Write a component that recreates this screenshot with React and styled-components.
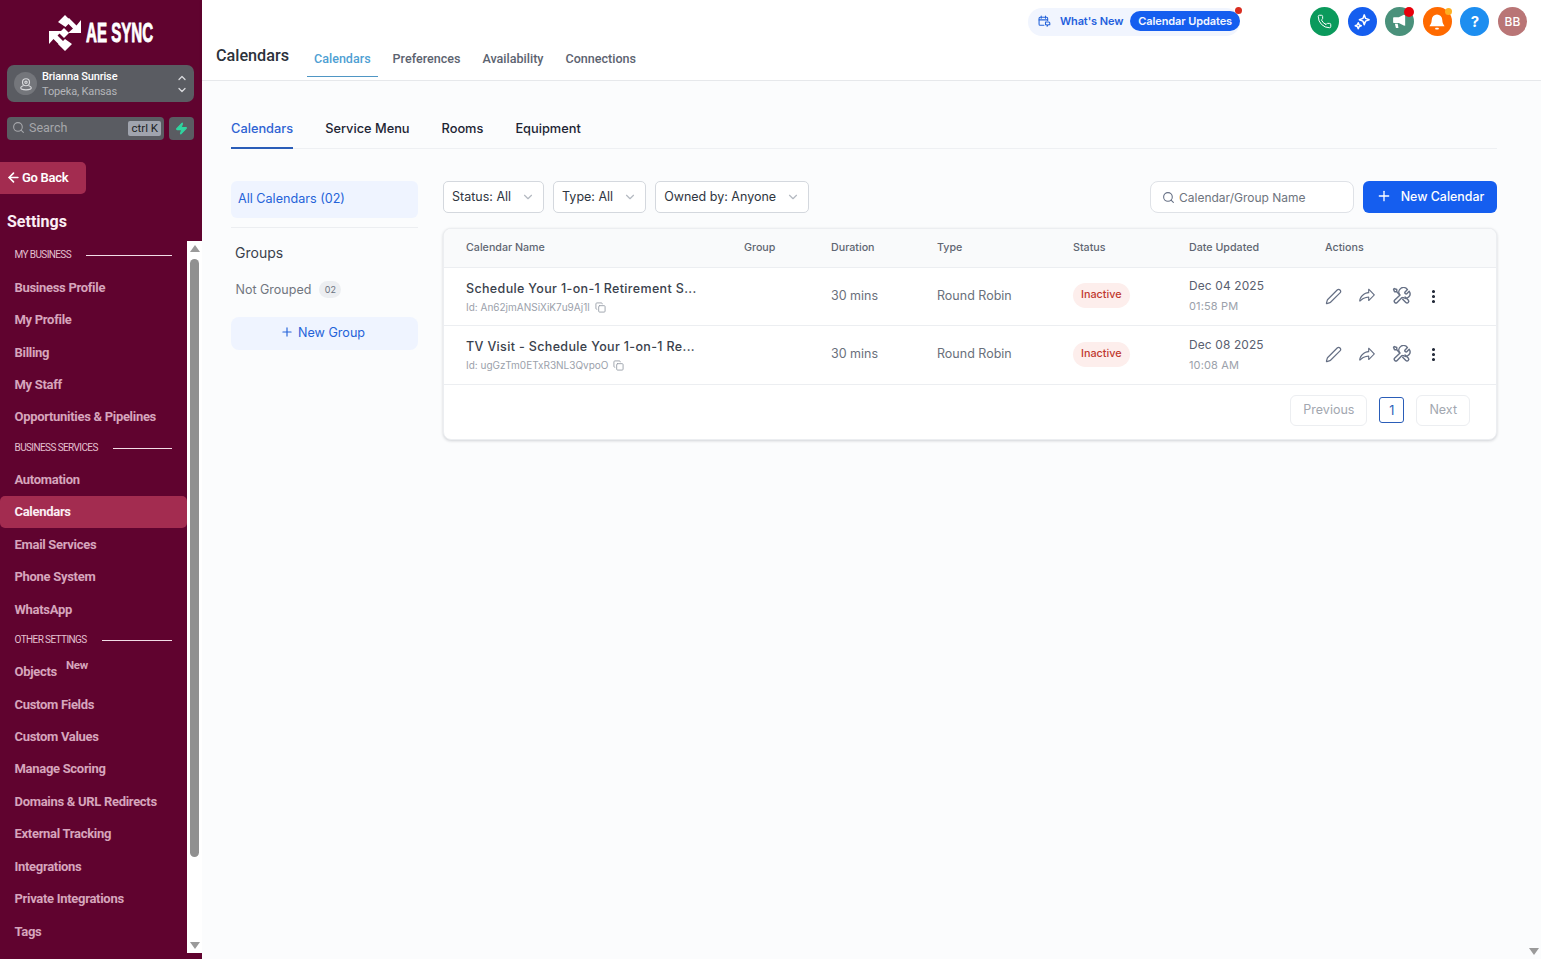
import React from 'react'
import styled, { createGlobalStyle } from 'styled-components'
import { Phone, Search, Plus, ChevronDown, ChevronUp, Copy, Pen, EllipsisVertical, ArrowLeft, Zap } from 'lucide-react'
import { PiShareFat } from 'react-icons/pi'

const GlobalStyle = createGlobalStyle`
    html, body {
        margin: 0;
        padding: 0;
        height: 100%;
        overflow: hidden;
        background: #fbfcfd;
    }
    * {
        box-sizing: border-box;
    }
`

const Page = styled.div`
    display: flex;
    width: 1541px;
    height: 959px;
    position: relative;
    overflow: hidden;
    font-family: Inter, "Liberation Sans", sans-serif;
`

/* sidebar */
const Sidebar = styled.aside`
    width: 202px;
    flex-shrink: 0;
    height: 100%;
    background: #60032f;
    display: flex;
    flex-direction: column;
    font-family: Roboto, "Liberation Sans", sans-serif;
`
const LogoRow = styled.div`
    height: 65px;
    display: flex;
    align-items: center;
    justify-content: center;
    padding-right: 4px;
    gap: 3px;
`
const LogoText = styled.span`
    display: inline-block;
    width: 66px;
    color: #fff;
    font-family: "Liberation Sans", sans-serif;
    font-weight: 700;
    font-size: 27px;
    line-height: 30px;
    white-space: nowrap;
    transform: scaleX(0.56);
    transform-origin: left center;
    -webkit-text-stroke: 0.9px #fff;
`
const Switcher = styled.div`
    margin: 0 8px 0 7px;
    height: 37px;
    border-radius: 7px;
    background: #5a5c62;
    display: flex;
    align-items: center;
    padding: 0 6px 0 7px;
    color: #fff;
`
const PinCircle = styled.div`
    width: 23px;
    height: 23px;
    border-radius: 50%;
    background: #74767b;
    display: flex;
    align-items: center;
    justify-content: center;
    flex-shrink: 0;
    margin-right: 5px;
`
const SwitcherText = styled.div`
    flex: 1;
    font-size: 11px;
    line-height: 15px;
    font-weight: 500;
    letter-spacing: -0.15px;
`
const SwitcherSub = styled.div`
    color: #b4b5b9;
    font-weight: 400;
`
const UpDown = styled.div`
    display: flex;
    flex-direction: column;
    gap: 0;
    color: #d8d9dc;
`
const SearchRow = styled.div`
    display: flex;
    gap: 5px;
    margin: 15px 8px 0 7px;
`
const SideSearch = styled.div`
    flex: 1;
    height: 23px;
    border-radius: 4px;
    background: #5a5c62;
    color: #a6a7ab;
    display: flex;
    align-items: center;
    padding: 0 3px 2px 5px;
    font-size: 12.5px;
    gap: 4px;
`
const Kbd = styled.span`
    margin: 2px 0 0 auto;
    background: #a0a4ae;
    color: #1d1f24;
    font-size: 11.5px;
    line-height: 15px;
    padding: 0 3px;
    border-radius: 2px;
`
const BoltButton = styled.div`
    width: 25px;
    height: 23px;
    border-radius: 4px;
    background: #5a5c62;
    display: flex;
    align-items: center;
    justify-content: center;
`
const BackButton = styled.div`
    width: 86px;
    height: 32px;
    margin-top: 22px;
    border-radius: 0 5px 5px 0;
    background: #a32c50;
    color: #fff;
    font-weight: 600;
    font-size: 13px;
    letter-spacing: -0.3px;
    display: flex;
    align-items: center;
    padding: 0 0 2px 6px;
    gap: 1px;
`
const SettingsTitle = styled.h2`
    margin: 18px 0 0 7px;
    height: 20px;
    color: #fbeef4;
    font-size: 16px;
    line-height: 20px;
    font-weight: 700;
`
const NavArea = styled.div`
    flex: 1;
    min-height: 0;
    margin-top: 9px;
    margin-bottom: 6px;
    display: flex;
`
const NavList = styled.nav`
    width: 187px;
    overflow: hidden;
`
const SectionLabel = styled.div`
    height: 30px;
    padding: 0 15px 2px 14.5px;
    display: flex;
    align-items: center;
    gap: 15px;
    font-size: 10px;
    color: #e3c0d0;
    letter-spacing: -0.6px;
    white-space: nowrap;
    &::after {
        content: '';
        flex: 1;
        height: 1px;
        margin-top: 3px;
        background: #f2dde7;
    }
`
const NavGroup = styled.div`
    &:first-child ${SectionLabel} {
        margin-top: -1px;
        margin-bottom: 1px;
    }
`
const NavItem = styled.a`
    height: 32.45px;
    display: flex;
    align-items: center;
    padding-left: 14.5px;
    border-radius: 5px;
    font-size: 13px;
    font-weight: 700;
    letter-spacing: -0.3px;
    white-space: nowrap;
    color: ${(p) => (p.$active ? '#fbeef4' : '#d6a5bc')};
    background: ${(p) => (p.$active ? '#a32c50' : 'transparent')};
`
const NewTag = styled.span`
    position: relative;
    top: -7px;
    margin-left: 9px;
    font-size: 11.5px;
    color: #d6a5bc;
`
const ScrollTrack = styled.div`
    width: 15px;
    background: #fff;
    display: flex;
    flex-direction: column;
    align-items: center;
    padding: 4px 0;
`
const ArrowUp = styled.div`
    width: 0;
    height: 0;
    border-left: 5px solid transparent;
    border-right: 5px solid transparent;
    border-bottom: 7px solid #9a9a9a;
`
const ArrowDown = styled.div`
    width: 0;
    height: 0;
    border-left: 5px solid transparent;
    border-right: 5px solid transparent;
    border-top: 7px solid #9a9a9a;
`
const Thumb = styled.div`
    width: 9px;
    height: 598px;
    margin: 7px 0 auto;
    border-radius: 5px;
    background: #909090;
`

/* main area */
const Main = styled.main`
    flex: 1;
    min-width: 0;
    display: flex;
    flex-direction: column;
`
const TopBar = styled.header`
    height: 81px;
    flex-shrink: 0;
    background: #fff;
    border-bottom: 1px solid #e6e8eb;
    box-shadow: 0 1px 4px rgba(16, 24, 40, 0.06);
    display: flex;
    justify-content: space-between;
    padding-left: 14px;
    font-family: Roboto, "Liberation Sans", sans-serif;
`
const TopLeft = styled.div`
    display: flex;
    align-items: flex-end;
`
const PageTitle = styled.h1`
    margin: 0 18px 12px 0;
    font-size: 16.2px;
    line-height: 24px;
    font-weight: 500;
    color: #2c323b;
`
const TopTab = styled.a`
    height: 44px;
    margin: 0 8px 3px 0;
    padding: 7px 7px 0;
    display: flex;
    align-items: center;
    font-size: 12.55px;
    font-weight: 500;
    color: ${(p) => (p.$active ? '#4f9fd3' : '#5c6370')};
    border-bottom: 1px solid ${(p) => (p.$active ? '#4f96c4' : 'transparent')};
`
const TopRight = styled.div`
    display: flex;
    align-items: flex-start;
    padding: 7px 14px 0 0;
`
const WhatsNew = styled.div`
    position: relative;
    width: 212px;
    height: 28px;
    margin: 1px 70px 0 0;
    padding: 0 0 2px 10px;
    border-radius: 14px;
    background: #f1f5fe;
    display: flex;
    align-items: center;
    font-family: Inter, sans-serif;
    font-size: 11px;
    font-weight: 600;
    color: #1f5fdd;
    letter-spacing: -0.1px;
`
const WhatsNewLabel = styled.span`
    margin-left: 9px;
    white-space: nowrap;
`
const UpdatesPill = styled.span`
    margin-left: 7px;
    height: 20px;
    padding: 0 8px 1px;
    border-radius: 10px;
    background: #155eef;
    color: #f2f6ff;
    display: flex;
    align-items: center;
    white-space: nowrap;
`
const PillDot = styled.span`
    position: absolute;
    top: -1px;
    right: -2px;
    width: 7px;
    height: 7px;
    border-radius: 50%;
    background: #d92d20;
`
const RoundIcons = styled.div`
    display: flex;
    gap: 8.6px;
`
const RoundIcon = styled.div`
    position: relative;
    width: 29px;
    height: 29px;
    border-radius: 50%;
    background: ${(p) => p.$bg};
    color: #fff;
    display: flex;
    align-items: center;
    justify-content: center;
    font-size: ${(p) => (p.$weight ? '15px' : '12px')};
    font-weight: ${(p) => p.$weight || 500};
    font-family: Inter, sans-serif;
`
const IconDot = styled.span`
    position: absolute;
    top: ${(p) => (p.$big ? '0' : '1px')};
    right: 0;
    width: ${(p) => (p.$big ? '10px' : '7px')};
    height: ${(p) => (p.$big ? '10px' : '7px')};
    border-radius: 50%;
    background: ${(p) => p.$color};
`

const Content = styled.section`
    flex: 1;
    padding: 31px 44px 0 29px;
    background: #fbfcfd;
`
const SubTabs = styled.div`
    display: flex;
    gap: 32px;
    height: 37px;
    border-bottom: 1px solid #eef0f3;
`
const SubTab = styled.a`
    height: 37px;
    padding-bottom: 3px;
    display: flex;
    align-items: center;
    font-size: 12.8px;
    font-weight: 500;
    color: ${(p) => (p.$active ? '#2f63d3' : '#1d2433')};
    border-bottom: 2px solid ${(p) => (p.$active ? '#2a5db8' : 'transparent')};
`
const Columns = styled.div`
    display: flex;
    margin-top: 32px;
    gap: 25px;
`
const GroupsPanel = styled.div`
    width: 187px;
    flex-shrink: 0;
`
const AllCalendars = styled.div`
    height: 37px;
    padding: 0 0 3px 7px;
    border-radius: 6px;
    background: #eff4ff;
    color: #2563d9;
    font-size: 12.6px;
    display: flex;
    align-items: center;
`
const PanelRule = styled.hr`
    border: 0;
    height: 1px;
    background: #eceef1;
    margin: 9px 0 0;
`
const GroupsTitle = styled.div`
    margin: 16px 0 0 4px;
    font-size: 14px;
    line-height: 18px;
    color: #3a414c;
`
const GroupRow = styled.div`
    display: flex;
    align-items: center;
    gap: 8px;
    margin: 18px 0 0 4.5px;
    height: 18px;
    font-size: 12.5px;
    color: #71767f;
`
const CountBadge = styled.span`
    width: 22px;
    height: 17px;
    border-radius: 9px;
    background: #eceef1;
    color: #6b7280;
    font-size: 9px;
    display: flex;
    align-items: center;
    justify-content: center;
`
const NewGroup = styled.div`
    margin-top: 19px;
    height: 33px;
    padding: 0 4px 3px 0;
    border-radius: 8px;
    background: #eff4ff;
    color: #2563d9;
    font-size: 12.6px;
    display: flex;
    align-items: center;
    justify-content: center;
    gap: 4px;
`
const ListPanel = styled.div`
    flex: 1;
    min-width: 0;
`
const FilterBar = styled.div`
    display: flex;
    align-items: center;
    gap: 9px;
    height: 32px;
`
const Filter = styled.div`
    height: 32px;
    padding: 0 8px 1px 8px;
    display: flex;
    align-items: center;
    gap: 10px;
    background: #fff;
    border: 1px solid #d4d8de;
    border-radius: 5px;
    font-size: 12.5px;
    color: #2f3641;
    white-space: nowrap;
`
const SearchBox = styled.div`
    width: 204px;
    height: 32px;
    margin-left: auto;
    background: #fff;
    border: 1px solid #dfe2e7;
    border-radius: 8px;
    display: flex;
    align-items: center;
    gap: 4px;
    padding-left: 11px;
    font-size: 12px;
    color: #6e747e;
`
const PrimaryButton = styled.button`
    width: 134px;
    height: 32px;
    padding: 0 0 2px 0;
    border: 0;
    border-radius: 6px;
    background: #155eef;
    color: #fff;
    font-family: inherit;
    font-size: 12.4px;
    font-weight: 500;
    display: flex;
    align-items: center;
    justify-content: center;
    gap: 9px;
`
const TableCard = styled.div`
    margin-top: 15px;
    background: #fff;
    border: 1px solid #eceef1;
    border-radius: 8px;
    box-shadow: 0 1px 3px rgba(16, 24, 40, 0.18);
    overflow: hidden;
`
const Row = styled.div`
    display: grid;
    grid-template-columns: 278px 87px 106px 136px 116px 136px 1fr;
    align-items: center;
    padding-left: 22px;
    height: ${(p) => (p.$head ? '38.5px' : '58.5px')};
    background: ${(p) => (p.$head ? '#f9fafb' : '#fff')};
    border-bottom: 1px solid #eceef1;
`
const HeadCell = styled.div`
    font-size: 10.7px;
    font-weight: 500;
    color: #5f6672;
`
const NameCell = styled.div`
    display: flex;
    flex-direction: column;
    gap: 4px;
    padding-top: 2px;
`
const CalName = styled.div`
    font-size: 12.5px;
    line-height: 16px;
    font-weight: 500;
    color: #3a414c;
    letter-spacing: 0.35px;
    white-space: nowrap;
`
const CalId = styled.div`
    display: flex;
    align-items: center;
    gap: 5px;
    font-size: 10px;
    line-height: 13px;
    color: #9ba1ab;
`
const Cell = styled.div`
    padding-bottom: 2px;
    font-size: 12.5px;
    color: #6a707b;
`
const StatusCell = styled.div`
    padding-bottom: 2px;
`
const StatusPill = styled.span`
    display: inline-flex;
    align-items: center;
    height: 25px;
    padding: 0 8px 2px;
    border-radius: 13px;
    background: #fdeeec;
    color: #c0392f;
    font-size: 10.8px;
    font-weight: 500;
`
const DateCell = styled.div`
    display: flex;
    flex-direction: column;
    gap: 6px;
    font-size: 11.9px;
    line-height: 15px;
    color: #596070;
    letter-spacing: 0.15px;
`
const TimeText = styled.span`
    font-size: 11px;
    color: #9ba1ab;
`
const Actions = styled.div`
    display: flex;
    align-items: center;
    gap: 16px;
    color: #667085;
`
const MoreIcon = styled(EllipsisVertical)`
    margin-left: -2px;
    color: #1d2433;
`
const Pager = styled.div`
    height: 54px;
    padding: 0 26px 3px 0;
    display: flex;
    align-items: center;
    justify-content: flex-end;
    gap: 12px;
`
const PageButton = styled.div`
    height: 31px;
    padding: 0 12px 1px;
    display: flex;
    align-items: center;
    border: 1px solid #eceef1;
    border-radius: 6px;
    font-size: 12.5px;
    color: #a2a7b0;
`
const PageNumber = styled.div`
    width: 25px;
    height: 26px;
    display: flex;
    align-items: center;
    justify-content: center;
    border: 1px solid #2a5db8;
    border-radius: 3px;
    font-size: 12.5px;
    color: #2a5db8;
`
const PageScrollArrow = styled.div`
    position: absolute;
    right: 2px;
    bottom: 4px;
    width: 0;
    height: 0;
    border-left: 5px solid transparent;
    border-right: 5px solid transparent;
    border-top: 7px solid #9a9a9a;
`

const LogoMark = () => (
    <svg width="36" height="40" viewBox="2 2 36 40" fill="#fff">
        <path d="M20 4l7 7-3.500 2-3 3L13 11z" />
        <path d="M24 7l7.500 7.500L36 9v13H23l5-4.500L20.500 10z" />
        <path d="M4 20h13l-4.500 4.500 7.500 7.500-4 3.500-7.500-7.500L4 33z" />
        <path d="M20 40l-7-7 4-2 3-3 7 5z" />
        <path d="M19 17l5 5-5 5-5-5z" />
    </svg>
)

const PinPerson = () => (
    <svg width="14" height="14" viewBox="0 0 24 24" fill="none" stroke="#d8d9dc" strokeWidth="2" strokeLinecap="round" strokeLinejoin="round">
        <circle cx="12" cy="9" r="6" />
        <circle cx="12" cy="9" r="2" />
        <path d="M7 15c-2.500 1-4 2.200-4 3.500C3 20.500 7 22 12 22s9-1.500 9-3.500c0-1.300-1.500-2.500-4-3.500" />
    </svg>
)

const Sparkle = () => (
    <svg width="18" height="18" viewBox="0 0 24 24" fill="none" stroke="#fff" strokeWidth="2" strokeLinejoin="round">
        <path d="M15 2.500l1.800 4.700 4.700 1.800-4.700 1.800L15 15.500l-1.800-4.700L8.500 9l4.700-1.800z" />
        <path d="M7 13l1.200 2.800L11 17l-2.800 1.200L7 21l-1.200-2.800L3 17l2.800-1.200z" />
    </svg>
)

const MegaphoneSolid = () => (
    <svg width="17" height="17" viewBox="0 0 24 24" fill="#fff">
        <path d="M20 3v15l-2-.5-7-3.500H4a1 1 0 0 1-1-1V7a1 1 0 0 1 1-1h7l7-3.500z" />
        <path d="M5.500 15h4l1 6h-3.500z" />
    </svg>
)

const BellSolid = () => (
    <svg width="18" height="18" viewBox="0 0 24 24" fill="#fff">
        <path d="M12 2a7 7 0 0 0-7 7c0 5-2.500 7-3 8.500h20c-.5-1.500-3-3.500-3-8.500a7 7 0 0 0-7-7z" />
        <rect x="9.500" y="19.500" width="5" height="2.500" rx="1.200" />
    </svg>
)

const CalendarChat = () => (
    <svg width="15" height="15" viewBox="0 0 24 24" fill="none" stroke="#2563d9" strokeWidth="2" strokeLinecap="round" strokeLinejoin="round">
        <path d="M11 19H4a2 2 0 0 1-2-2V6a2 2 0 0 1 2-2h12a2 2 0 0 1 2 2v4" />
        <path d="M2 9h16M6 2v4M14 2v4" />
        <path d="M14 13h6a2 2 0 0 1 2 2v3l-3 0-2 3v-3h-3z" />
    </svg>
)

const ToolsIcon = () => (
    <svg width="19" height="19" viewBox="0 0 24 24" fill="none" stroke="currentColor" strokeWidth="1.8" strokeLinecap="round" strokeLinejoin="round">
        <path d="M19.500 3.300l-3 3a1.200 1.200 0 0 0 0 1.700l.5.5a1.200 1.200 0 0 0 1.700 0l3-3A5.500 5.500 0 0 1 14.500 13.500c-.4 0-.8 0-1.200-.1-.6-.1-.9 0-1.300.4L6.500 19.500a2.100 2.100 0 0 1-3-3l5.700-5.500c.4-.4.5-.7.4-1.300a5.500 5.500 0 0 1 9.900-6.400z" />
        <path d="M6 6l4 4M6 6H3.200L2 3l1-1 3 1.200z" />
        <path d="M13.500 15.500l4 4a2.100 2.100 0 0 0 3-3l-4-4" />
    </svg>
)

const topTabs = ['Calendars', 'Preferences', 'Availability', 'Connections']
const subTabs = ['Calendars', 'Service Menu', 'Rooms', 'Equipment']

const navGroups = [
    { label: 'MY BUSINESS', items: ['Business Profile', 'My Profile', 'Billing', 'My Staff', 'Opportunities & Pipelines'] },
    { label: 'BUSINESS SERVICES', items: ['Automation', 'Calendars', 'Email Services', 'Phone System', 'WhatsApp'] },
    { label: 'OTHER SETTINGS', items: ['Objects', 'Custom Fields', 'Custom Values', 'Manage Scoring', 'Domains & URL Redirects', 'External Tracking', 'Integrations', 'Private Integrations', 'Tags'] },
]

const calendars = [
    { name: 'Schedule Your 1-on-1 Retirement S...', id: 'An62jmANSiXiK7u9Aj1l', date: 'Dec 04 2025', time: '01:58 PM' },
    { name: 'TV Visit - Schedule Your 1-on-1 Re...', id: 'ugGzTm0ETxR3NL3QvpoO', date: 'Dec 08 2025', time: '10:08 AM' },
]

const App = () => {
    return (
        <>
            <GlobalStyle />
            <Page>
                <Sidebar>
                    <LogoRow>
                        <LogoMark />
                        <LogoText>AE SYNC</LogoText>
                    </LogoRow>
                    <Switcher>
                        <PinCircle><PinPerson /></PinCircle>
                        <SwitcherText>
                            Brianna Sunrise
                            <SwitcherSub>Topeka, Kansas</SwitcherSub>
                        </SwitcherText>
                        <UpDown>
                            <ChevronUp size={12} strokeWidth={2.6} />
                            <ChevronDown size={12} strokeWidth={2.6} />
                        </UpDown>
                    </Switcher>
                    <SearchRow>
                        <SideSearch>
                            <Search size={13} />
                            Search
                            <Kbd>ctrl K</Kbd>
                        </SideSearch>
                        <BoltButton><Zap size={13} color="#2fd6a0" fill="#2fd6a0" /></BoltButton>
                    </SearchRow>
                    <BackButton>
                        <ArrowLeft size={15} strokeWidth={2.6} />
                        Go Back
                    </BackButton>
                    <SettingsTitle>Settings</SettingsTitle>
                    <NavArea>
                        <NavList>
                            {navGroups.map((group) => (
                                <NavGroup key={group.label}>
                                    <SectionLabel>{group.label}</SectionLabel>
                                    {group.items.map((item) => (
                                        <NavItem key={item} $active={item === 'Calendars'}>
                                            {item}
                                            {item === 'Objects' && <NewTag>New</NewTag>}
                                        </NavItem>
                                    ))}
                                </NavGroup>
                            ))}
                        </NavList>
                        <ScrollTrack>
                            <ArrowUp />
                            <Thumb />
                            <ArrowDown />
                        </ScrollTrack>
                    </NavArea>
                </Sidebar>

                <Main>
                    <TopBar>
                        <TopLeft>
                            <PageTitle>Calendars</PageTitle>
                            {topTabs.map((tab, i) => (
                                <TopTab key={tab} $active={i === 0}>{tab}</TopTab>
                            ))}
                        </TopLeft>
                        <TopRight>
                            <WhatsNew>
                                <CalendarChat />
                                <WhatsNewLabel>What's New</WhatsNewLabel>
                                <UpdatesPill>Calendar Updates</UpdatesPill>
                                <PillDot />
                            </WhatsNew>
                            <RoundIcons>
                                <RoundIcon $bg="#0b9a5c"><Phone size={15} strokeWidth={1.6} /></RoundIcon>
                                <RoundIcon $bg="#155eef"><Sparkle /></RoundIcon>
                                <RoundIcon $bg="#4a917b"><MegaphoneSolid /><IconDot $big $color="#e8000b" /></RoundIcon>
                                <RoundIcon $bg="#ff6a00"><BellSolid /><IconDot $color="#fdb022" /></RoundIcon>
                                <RoundIcon $bg="#1d8ef0" $weight={700}>?</RoundIcon>
                                <RoundIcon $bg="#b97576">BB</RoundIcon>
                            </RoundIcons>
                        </TopRight>
                    </TopBar>

                    <Content>
                        <SubTabs>
                            {subTabs.map((tab, i) => (
                                <SubTab key={tab} $active={i === 0}>{tab}</SubTab>
                            ))}
                        </SubTabs>
                        <Columns>
                            <GroupsPanel>
                                <AllCalendars>All Calendars (02)</AllCalendars>
                                <PanelRule />
                                <GroupsTitle>Groups</GroupsTitle>
                                <GroupRow>
                                    Not Grouped
                                    <CountBadge>02</CountBadge>
                                </GroupRow>
                                <NewGroup>
                                    <Plus size={14} />
                                    New Group
                                </NewGroup>
                            </GroupsPanel>
                            <ListPanel>
                                <FilterBar>
                                    <Filter>Status: All <ChevronDown size={14} color="#b4b9c1" /></Filter>
                                    <Filter>Type: All <ChevronDown size={14} color="#b4b9c1" /></Filter>
                                    <Filter>Owned by: Anyone <ChevronDown size={14} color="#b4b9c1" /></Filter>
                                    <SearchBox>
                                        <Search size={13} color="#667085" />
                                        Calendar/Group Name
                                    </SearchBox>
                                    <PrimaryButton>
                                        <Plus size={16} />
                                        New Calendar
                                    </PrimaryButton>
                                </FilterBar>
                                <TableCard>
                                    <Row $head>
                                        <HeadCell>Calendar Name</HeadCell>
                                        <HeadCell>Group</HeadCell>
                                        <HeadCell>Duration</HeadCell>
                                        <HeadCell>Type</HeadCell>
                                        <HeadCell>Status</HeadCell>
                                        <HeadCell>Date Updated</HeadCell>
                                        <HeadCell>Actions</HeadCell>
                                    </Row>
                                    {calendars.map((cal) => (
                                        <Row key={cal.id}>
                                            <NameCell>
                                                <CalName>{cal.name}</CalName>
                                                <CalId>
                                                    Id: {cal.id}
                                                    <Copy size={11} />
                                                </CalId>
                                            </NameCell>
                                            <div />
                                            <Cell>30 mins</Cell>
                                            <Cell>Round Robin</Cell>
                                            <StatusCell><StatusPill>Inactive</StatusPill></StatusCell>
                                            <DateCell>
                                                {cal.date}
                                                <TimeText>{cal.time}</TimeText>
                                            </DateCell>
                                            <Actions>
                                                <Pen size={17} strokeWidth={1.7} />
                                                <PiShareFat size={18} />
                                                <ToolsIcon />
                                                <MoreIcon size={17} strokeWidth={2.4} />
                                            </Actions>
                                        </Row>
                                    ))}
                                    <Pager>
                                        <PageButton>Previous</PageButton>
                                        <PageNumber>1</PageNumber>
                                        <PageButton>Next</PageButton>
                                    </Pager>
                                </TableCard>
                            </ListPanel>
                        </Columns>
                    </Content>
                </Main>
                <PageScrollArrow />
            </Page>
        </>
    )
}

export default App
